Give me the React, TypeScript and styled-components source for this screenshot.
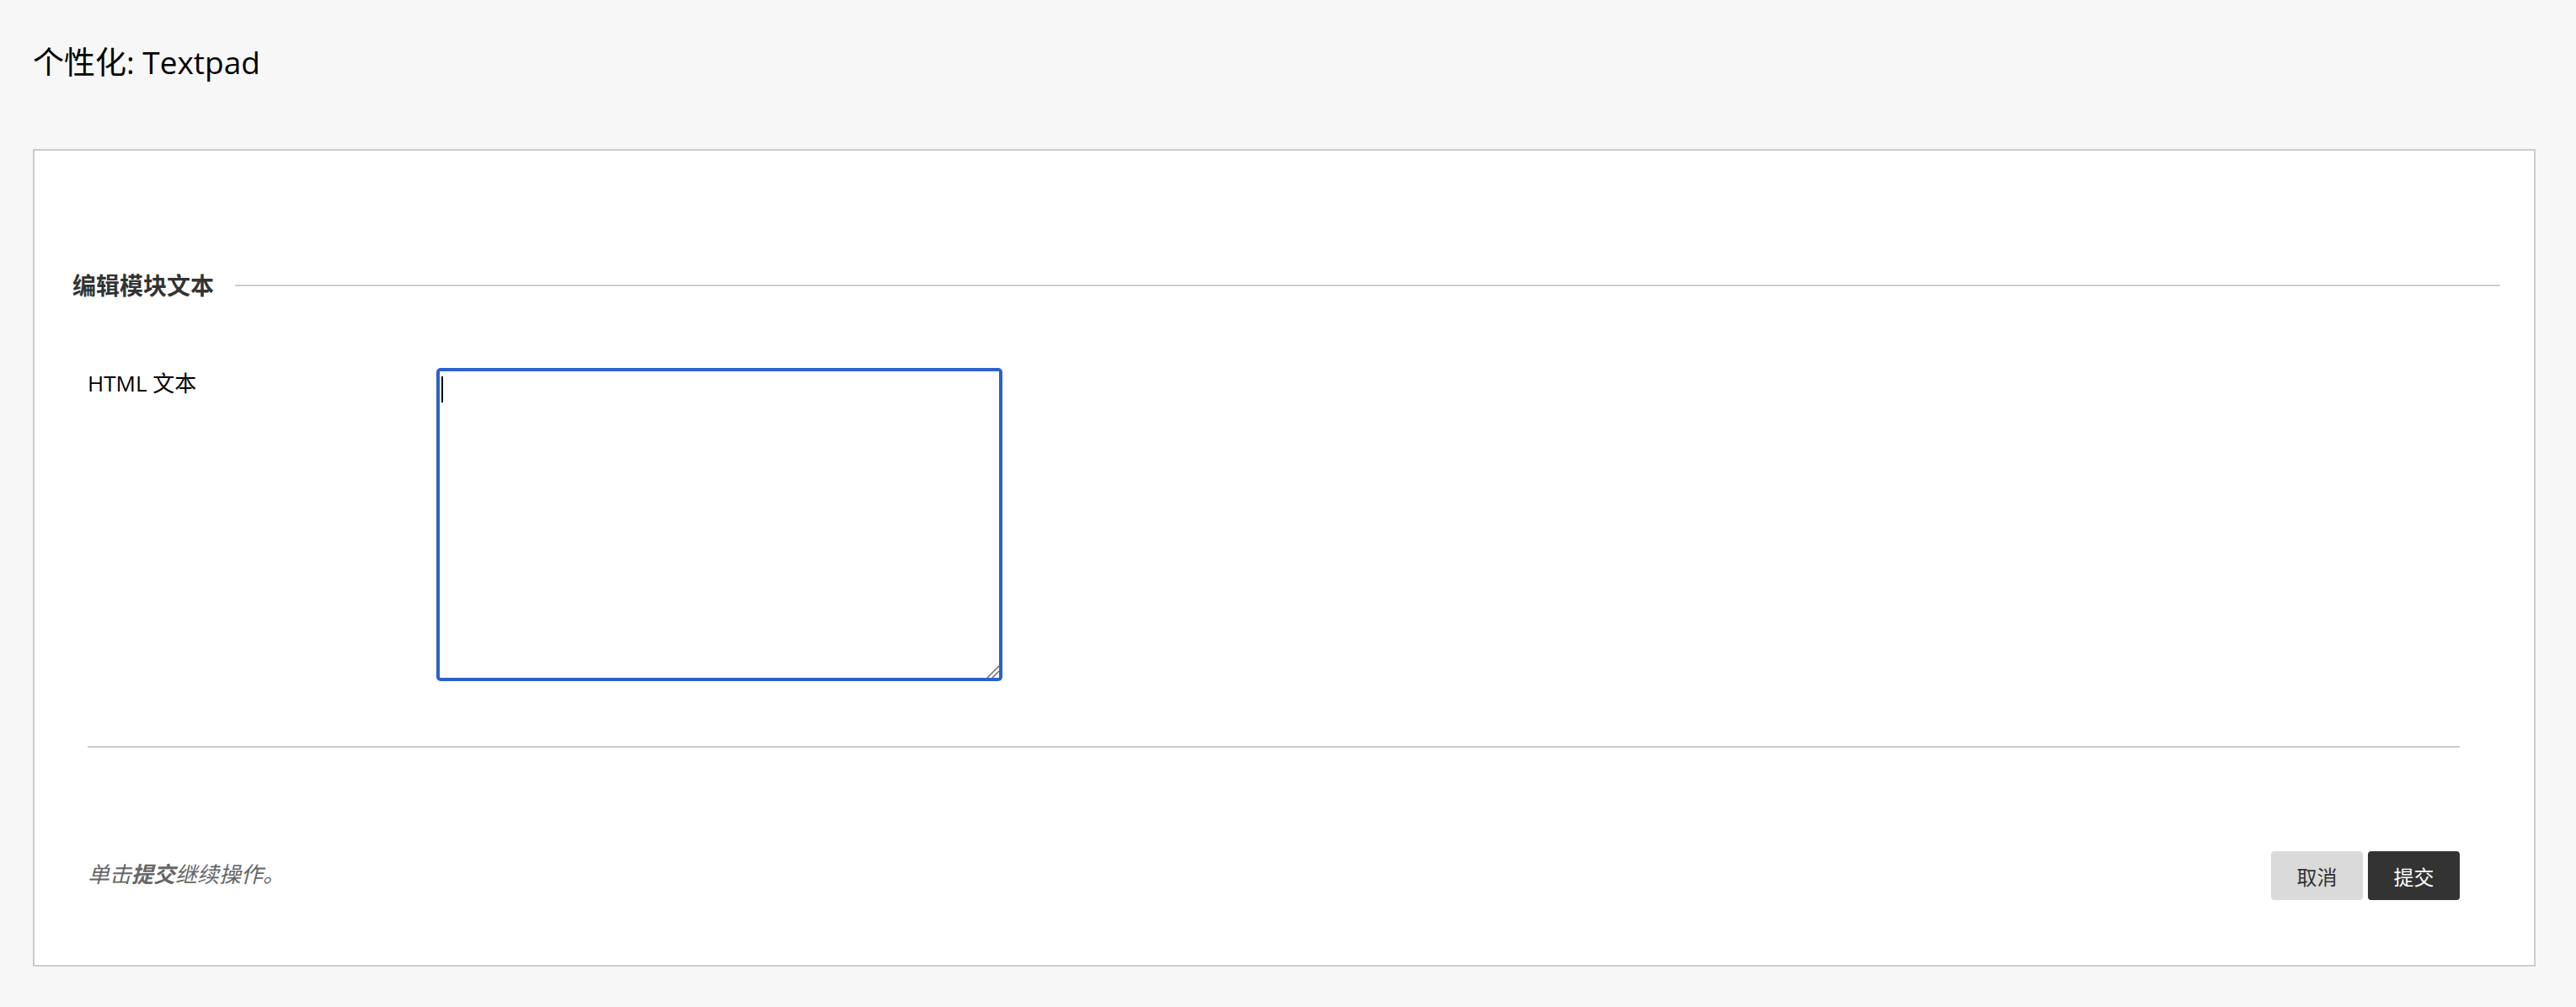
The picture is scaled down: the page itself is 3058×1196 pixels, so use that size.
import React from "react";
import styled, { createGlobalStyle } from "styled-components";

const GlobalStyle = createGlobalStyle`
  html, body {
    margin: 0;
    padding: 0;
    background: #f7f7f7;
  }
  body {
    font-family: "Open Sans", "Noto Sans CJK SC", sans-serif;
    color: #000;
  }
  * { box-sizing: border-box; }
`;

const Page = styled.div`
  padding: 48px 48px 48px 39px;
  min-height: 1196px;
`;

const Title = styled.h1`
  margin: 0 0 77px 0;
  font-family: "Open Sans", "Noto Sans CJK SC", sans-serif;
  font-size: 37px;
  line-height: 52px;
  font-weight: 400;
  color: #000;
`;

const Panel = styled.section`
  background: #fff;
  border: 2px solid #cccccc;
  padding: 140px 40px 77px 45px;
`;

const SectionHeader = styled.div`
  display: flex;
  align-items: center;
  gap: 25px;
`;

const SectionTitle = styled.h2`
  margin: 0;
  font-size: 28px;
  line-height: 40px;
  font-weight: 700;
  color: #333;
  white-space: nowrap;
`;

const Rule = styled.div`
  flex: 1;
  height: 2px;
  background: #cccccc;
`;

const FormBody = styled.div`
  padding: 0 48px 0 18px;
`;

const FieldRow = styled.div`
  display: flex;
  align-items: flex-start;
  margin-top: 78px;
`;

const FieldLabel = styled.label`
  width: 414px;
  flex: none;
  font-size: 26px;
  line-height: 36px;
  color: #000;
`;

const EditorBox = styled.div`
  position: relative;
  width: 672px;
  height: 372px;
  flex: none;
`;

const TextArea = styled.textarea`
  display: block;
  width: 100%;
  height: 100%;
  border: 4px solid #2c61c9;
  border-radius: 5px;
  padding: 2px;
  font-family: "Open Sans", "Noto Sans CJK SC", sans-serif;
  font-size: 26px;
  background: #fff;
  outline: none;
  resize: none;
  caret-color: #000;
`;

const Caret = styled.span`
  position: absolute;
  left: 6px;
  top: 10px;
  width: 2px;
  height: 31px;
  background: #000;
  pointer-events: none;
`;

const Grip = styled.svg`
  position: absolute;
  right: 4px;
  bottom: 4px;
  width: 15px;
  height: 15px;
  pointer-events: none;
`;

const Divider = styled.hr`
  margin: 77px 0 0 0;
  border: none;
  height: 2px;
  background: #cccccc;
`;

const Footer = styled.div`
  display: flex;
  align-items: center;
  justify-content: space-between;
  margin-top: 123px;
`;

const Hint = styled.p`
  margin: 0 0 4px 0;
  font-size: 26px;
  line-height: 36px;
  font-style: italic;
  color: #666;

  strong {
    font-weight: 700;
  }
`;

const Buttons = styled.div`
  display: flex;
  gap: 6px;
`;

const Button = styled.button<{ $primary?: boolean }>`
  height: 58px;
  width: 109px;
  border: none;
  border-radius: 4px;
  font-family: "Open Sans", "Noto Sans CJK SC", sans-serif;
  font-size: 24px;
  background: ${(p) => (p.$primary ? "#333333" : "#dadada")};
  color: ${(p) => (p.$primary ? "#ffffff" : "#333333")};
  cursor: pointer;
`;

export default function App() {
  return (
    <>
      <GlobalStyle />
      <Page>
        <Title>个性化: Textpad</Title>
        <Panel>
          <SectionHeader>
            <SectionTitle>编辑模块文本</SectionTitle>
            <Rule />
          </SectionHeader>
          <FormBody>
            <FieldRow>
              <FieldLabel htmlFor="html-text">HTML 文本</FieldLabel>
              <EditorBox>
                <TextArea id="html-text" />
                <Caret />
                <Grip viewBox="0 0 15 15">
                  <line x1="1" y1="15" x2="15" y2="1" stroke="#666" strokeWidth="1.4" />
                  <line x1="7" y1="15" x2="15" y2="7" stroke="#666" strokeWidth="1.4" />
                </Grip>
              </EditorBox>
            </FieldRow>
            <Divider />
            <Footer>
              <Hint>
                单击<strong>提交</strong>继续操作。
              </Hint>
              <Buttons>
                <Button type="button">取消</Button>
                <Button type="button" $primary>
                  提交
                </Button>
              </Buttons>
            </Footer>
          </FormBody>
        </Panel>
      </Page>
    </>
  );
}
